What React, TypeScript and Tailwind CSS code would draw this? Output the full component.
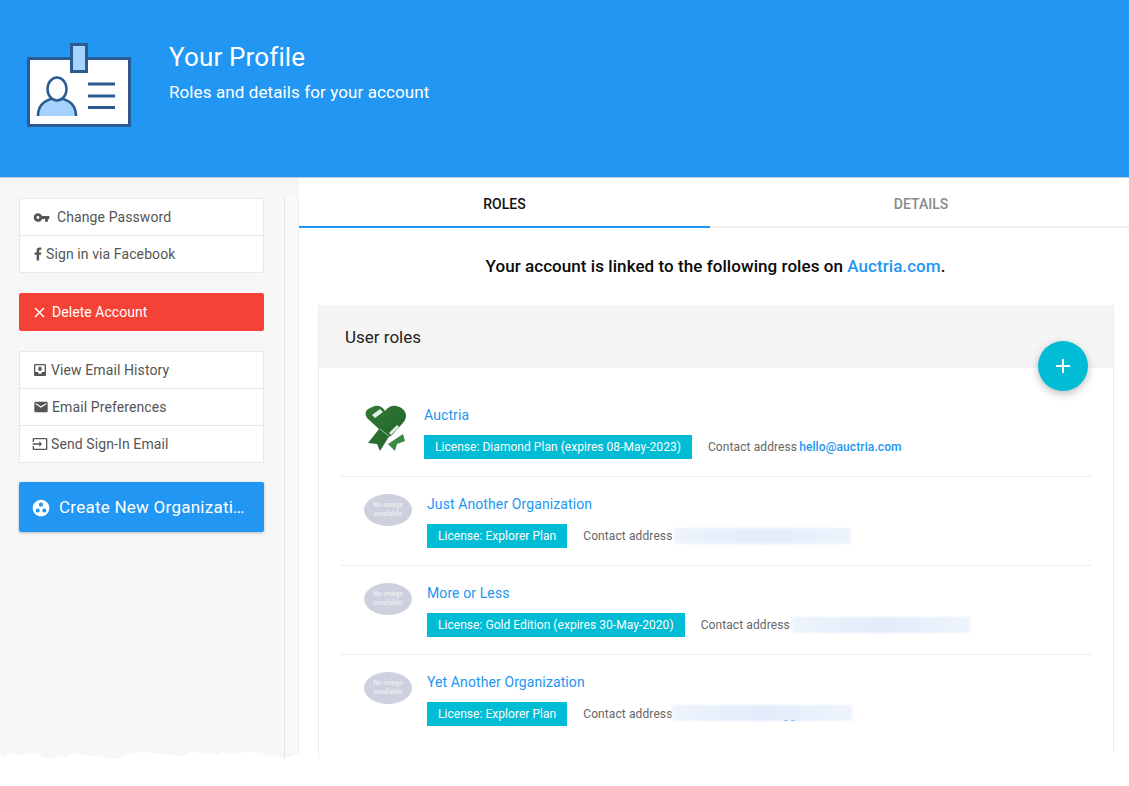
import { MdAdd, MdClose, MdEmail, MdGroupWork, MdInput, MdMoveToInbox, MdVpnKey } from 'react-icons/md';
import { FaFacebookF } from 'react-icons/fa';

const ProfileIcon = () => (
  <svg width="104" height="84" viewBox="0 0 104 84" className="shrink-0">
    <rect x="1.5" y="15.5" width="101" height="67" fill="#fff" stroke="#2c5a92" strokeWidth="3" />
    <rect x="44.5" y="1.5" width="15" height="27" fill="#a5d3fd" stroke="#2c5a92" strokeWidth="3" />
    <path d="M11 73c0-10 6-15 13-17 2 1.500 4 2 6 2s4-.5 6-2c7 2 13 7 13 17z" fill="#a5d3fd" />
    <path d="M11 73c0-10 6-15 13-17M49 73c0-10-6-15-13-17" fill="none" stroke="#2c5a92" strokeWidth="2.500" />
    <ellipse cx="30" cy="46" rx="9.500" ry="11.500" fill="#fff" stroke="#2c5a92" strokeWidth="2.500" />
    <path d="M61 41h27M61 53h27M61 64.500h27" stroke="#2c5a92" strokeWidth="3" />
  </svg>
);

const AuctriaLogo = () => (
  <svg width="45" height="46" viewBox="0 0 45 46" className="shrink-0">
    <defs>
      <linearGradient id="heart" x1="0" y1="0" x2="1" y2="1">
        <stop offset="0" stopColor="#2f7a35" />
        <stop offset="1" stopColor="#245f2a" />
      </linearGradient>
    </defs>
    <path d="M11 1C15 0 19 2 21 6C24 2 28 0 32 1C38 2 42 6 42 11C42 14 40 17 38 19L28 30L24 33L16 46L13 39L4 38L15 24L4 14C1 11 1 7 3 5C5 3 8 2 11 1Z" fill="url(#heart)" />
    <path d="M24 39L39 29L41 36L33 39L31 46Z" fill="#3b8a44" />
    <path d="M8 10L16 4L19 7L11 13ZM25 28L33 20L35 22L27 30Z" fill="#e4efe4" />
    <path d="M16 24L26 32" stroke="#cfe2cf" strokeWidth="1" opacity="0.7" />
  </svg>
);

const NoImage = () => (
  <div className="flex h-8 w-12 shrink-0 flex-col items-center justify-center rounded-[50%] bg-[#cdd1dd] text-center text-[7px] leading-[9px] font-bold text-[#e9ebf0]">
    <span>No image</span>
    <span>available</span>
  </div>
);

const SideItem = ({ icon, label, gap }: { icon: React.ReactNode; label: string; gap: string }) => (
  <div className={`flex h-[37px] items-center pl-[13px] text-sm tracking-[0.1px] text-[#555] last:h-9 ${gap}`}>
    {icon}
    <span>{label}</span>
  </div>
);

const BlurredAddress = ({ width, last }: { width: string; last?: boolean }) => (
  <div className={last ? 'relative mt-[-2px] ml-[-2px]' : 'relative'}>
    <div className={`h-[16px] bg-gradient-to-r from-[#eef4fd] via-[#e2ecfa] to-[#eef4fd] blur-[1px] ${width}`} />
    {last && (
      <div className="absolute top-[15px] left-[112px] flex gap-[3px]">
        <div className="h-px w-[4px] bg-[#8cc4f8]" />
        <div className="h-px w-[4px] bg-[#8cc4f8]" />
      </div>
    )}
  </div>
);

const roles = [
  { name: 'Just Another Organization', license: 'License: Explorer Plan', width: 'w-[177px]', last: false },
  { name: 'More or Less', license: 'License: Gold Edition (expires 30-May-2020)', width: 'w-[178px]', last: false },
  { name: 'Yet Another Organization', license: 'License: Explorer Plan', width: 'w-[180px]', last: true },
];

const RoleRow = ({ name, license, image, contact }: { name: string; license: string; image: React.ReactNode; contact: React.ReactNode }) => (
  <div className="flex h-[89px] gap-[15px] border-b border-[#eeeeee] pt-[17px] pl-6 last:border-b-0">
    {image}
    <div>
      <div className="h-5 text-sm leading-5 tracking-[0.1px] text-[#2196f3]">{name}</div>
      <div className="mt-[10px] flex items-center gap-4">
        <span className="flex h-6 items-center bg-[#00bcd4] px-[11px] text-xs tracking-[0.04px] text-white">{license}</span>
        <div className="flex items-center gap-[2px] text-xs tracking-[0.1px] text-[#666]">
          <span>Contact address</span>
          {contact}
        </div>
      </div>
    </div>
  </div>
);

export default function App() {
  return (
    <div className="relative h-[786px] overflow-hidden bg-white font-['Roboto',sans-serif]">
      <header className="flex h-[178px] border-b border-[#c3c9cf] bg-[#2196f3] pt-[43px] pl-[27px] text-white">
        <ProfileIcon />
        <div className="ml-[38px]">
          <h1 className="mt-[-1px] text-[26px] leading-[30px] tracking-[0.15px]">Your Profile</h1>
          <p className="mt-[8px] text-[17px] leading-6 tracking-[0.1px]">Roles and details for your account</p>
        </div>
      </header>

      <div className="flex h-[578px]">
        <aside className="flex h-[581px] w-[299px] shrink-0 bg-[#f7f7f7] pt-5">
          <div className="flex w-[285px] flex-col gap-5 border-r border-[#e4e4e4] pr-5 pl-[19px]">
            <div className="divide-y divide-[#e8e8e8] rounded-[2px] border border-[#e8e8e8] bg-white">
              <SideItem gap="gap-[7px]" icon={<MdVpnKey className="size-[17px] text-[#555]" />} label="Change Password" />
              <SideItem gap="gap-[4px]" icon={<FaFacebookF className="ml-px size-[14px] w-[8px] text-[#555]" />} label="Sign in via Facebook" />
            </div>
            <button className="flex h-[38px] items-center gap-1 rounded-[2px] bg-[#f44336] pl-3 text-sm tracking-[0.05px] text-white">
              <MdClose className="size-[17px]" />
              Delete Account
            </button>
            <div className="divide-y divide-[#e8e8e8] border border-[#e8e8e8] bg-white">
              <SideItem gap="gap-[3px]" icon={<MdMoveToInbox className="ml-[-1px] size-4 text-[#555]" />} label="View Email History" />
              <SideItem gap="gap-[3px]" icon={<MdEmail className="size-4 text-[#555]" />} label="Email Preferences" />
              <SideItem gap="gap-[3px]" icon={<MdInput className="ml-[-1px] size-4 text-[#555]" />} label="Send Sign-In Email" />
            </div>
            <button className="mt-[-1px] flex h-[50px] items-center gap-2 rounded-[2px] bg-[#2196f3] pt-[2px] pr-[17px] pl-3 text-[17px] tracking-[0.25px] text-white shadow-[0_1px_3px_rgba(0,0,0,0.25)]">
              <MdGroupWork className="size-5 shrink-0" />
              <span className="truncate">Create New Organization</span>
            </button>
          </div>
          <div className="h-[555px] w-[14px] border-r border-[#eeeeee] bg-[#fafafa]" />
        </aside>

        <main className="min-w-0 flex-1">
          <div className="flex h-[50px] border-b-2 border-[#eeeeee] pt-[3px] text-sm font-medium">
            <div className="mt-[-3px] mb-[-2px] flex w-[411px] items-center justify-center border-b-2 border-[#2196f3] pt-[3px] text-[#111]">ROLES</div>
            <div className="flex flex-1 items-center justify-center pl-[3px] text-[#8a8a8a]">DETAILS</div>
          </div>
          <p className="mt-[26px] pl-[3px] text-center text-[17px] leading-6 font-medium tracking-[0.06px] text-[#0a0a0a]">
            Your account is linked to the following roles on <span className="text-[#2196f3]">Auctria.com</span>.
          </p>
          <section className="relative mt-[27px] mr-[15px] ml-[19px] h-[447px] border-r border-[#eeeeee]">
            <div className="absolute top-0 left-0 h-[453px] w-px bg-[#eeeeee]" />
            <div className="flex h-[63px] items-center bg-[#f5f5f5] pt-[2px] pl-[27px] text-[17px] text-[#222]">User roles</div>
            <button className="absolute top-[36px] right-[25px] flex size-[50px] items-center justify-center rounded-full bg-[#00bcd4] text-white shadow-[0_3px_8px_rgba(0,0,0,0.25)]">
              <MdAdd className="size-6" />
            </button>
            <div className="mr-[21px] ml-[22px] pt-5">
              <RoleRow
                name="Auctria"
                license="License: Diamond Plan (expires 08-May-2023)"
                image={<AuctriaLogo />}
                contact={<span className="font-medium text-[#2196f3]">hello@auctria.com</span>}
              />
              {roles.map((r) => (
                <RoleRow
                  key={r.name}
                  name={r.name}
                  license={r.license}
                  image={<NoImage />}
                  contact={<BlurredAddress width={r.width} last={r.last} />}
                />
              ))}
            </div>
          </section>
        </main>
      </div>

      {/* torn paper edge along the bottom of the sidebar */}
      <svg className="absolute top-[745px] left-0" width="299" height="41" viewBox="0 0 299 41">
        <path
          d="M0 9.300L4 12.300L11.700 7.300L16.700 10.700L25 8.300L31.700 10L36.700 7.700L43.300 12.300L50 13.700L55 12.300L60 10L65 12.300L76.700 7.300L86.700 10.700L96.700 11L106.700 13.300L116.700 14.300L126.700 8.300L140 7.300L153.300 7.700L170 10L181.700 11L195 5.700L201.700 9.300L211.700 7.300L216.700 10L223.300 7.300L233.300 9.300L246.700 6.700L260 7.300L270 11.700L276.700 9.300L284 14V41H0Z"
          fill="#fff"
        />
        <path d="M285 13L290 12L299 8V41H285Z" fill="#fff" />
        <rect x="284" y="14" width="1" height="27" fill="#fff" />
      </svg>
    </div>
  );
}
